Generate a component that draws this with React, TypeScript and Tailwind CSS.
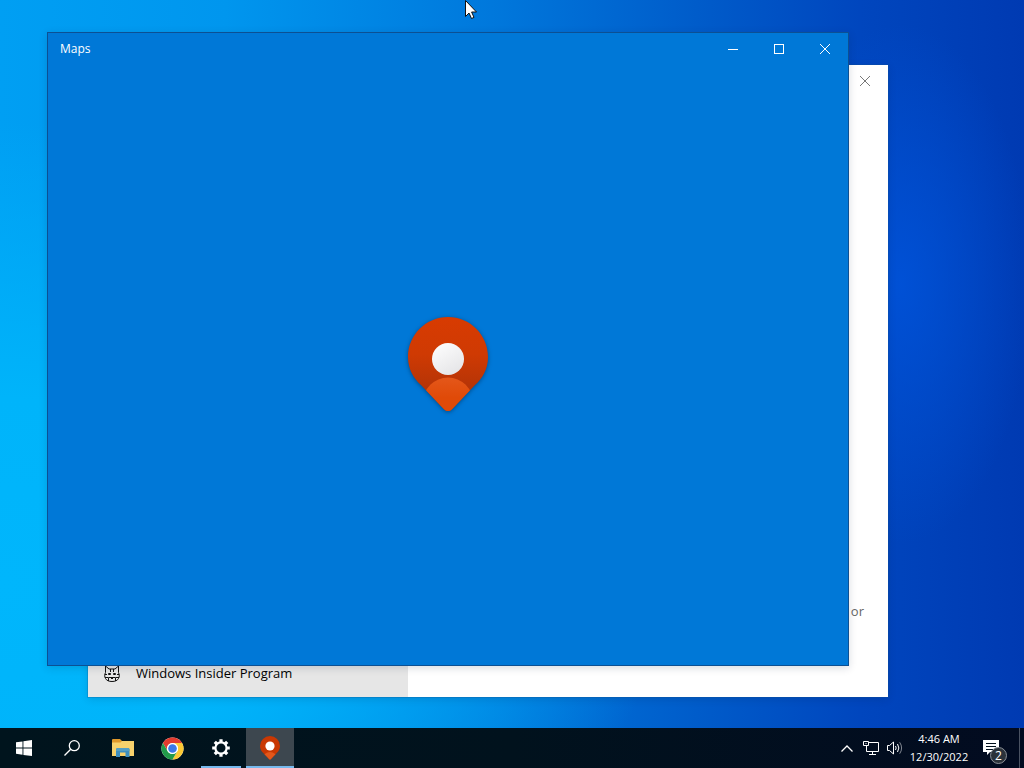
import type { ReactNode } from 'react';
import clsx from 'clsx';

function CloseGlyph() {
  return (
    <svg viewBox="0 0 10 10" className="size-[10px]" fill="none" stroke="currentColor" strokeWidth="1">
      <path d="M0 0 10 10M10 0 0 10" />
    </svg>
  );
}

function MinimizeGlyph() {
  return (
    <svg viewBox="0 0 10 10" className="size-[10px]" fill="none" stroke="currentColor" strokeWidth="1">
      <path d="M0 5.5H10" />
    </svg>
  );
}

function MaximizeGlyph() {
  return (
    <svg viewBox="0 0 10 10" className="size-[10px]" fill="none" stroke="currentColor" strokeWidth="1">
      <rect x="0.5" y="0.5" width="9" height="9" />
    </svg>
  );
}

function MapsPin({ className }: { className?: string }) {
  return (
    <svg viewBox="0 0 82 96" className={className}>
      <defs>
        <linearGradient id="pin-body" x1="0" y1="0" x2="0" y2="1">
          <stop offset="0" stopColor="#d83b01" />
          <stop offset="0.4" stopColor="#cf3a03" />
          <stop offset="0.75" stopColor="#b53407" />
        </linearGradient>
        <linearGradient id="pin-dot" x1="0" y1="0" x2="0.6" y2="1">
          <stop offset="0" stopColor="#ffffff" />
          <stop offset="1" stopColor="#e6e6e8" />
        </linearGradient>
        <linearGradient id="pin-tip" x1="0" y1="0" x2="0" y2="1">
          <stop offset="0" stopColor="#e4571a" />
          <stop offset="0.4" stopColor="#e04a08" />
        </linearGradient>
        <clipPath id="pin-shape">
          <path d="M41 1C18.900 1 1 18.900 1 41C1 53 6.500 62.500 14 69L37 93.200Q41 97 45 93.200L68 69C75.500 62.500 81 53 81 41C81 18.900 63.100 1 41 1Z" />
        </clipPath>
      </defs>
      <g clipPath="url(#pin-shape)">
        <rect width="82" height="96" fill="url(#pin-body)" />
        <circle cx="41" cy="86.500" r="25" fill="url(#pin-tip)" />
      </g>
      <circle cx="41" cy="43" r="16" fill="url(#pin-dot)" />
    </svg>
  );
}

// Taskbar size of the pin: same shape, larger dot so it reads at 24px
function MapsPinSmall() {
  return (
    <svg viewBox="0 0 20 24" className="h-6 w-5">
      <path d="M10 0A10 10 0 0 0 0 10C0 13 1.500 15.300 3.300 17.100L9 23Q10 24 11 23L16.700 17.100C18.500 15.300 20 13 20 10A10 10 0 0 0 10 0Z" fill="#c93803" />
      <path d="M4.500 18.300Q10 13.500 15.500 18.300L11 23Q10 24 9 23Z" fill="#e4571a" />
      <circle cx="10" cy="10" r="4.600" fill="#fff" />
    </svg>
  );
}

function InsiderIcon() {
  return (
    <svg viewBox="0 0 16 18" className="h-[18px] w-4" fill="none" stroke="#111">
      <path d="M1.500 7.500V1L5 4H11L14.500 1V7.500" />
      <path d="M1.500 7.500C.3 10 .6 12 1.500 13.500C2.500 15.500 5 16.500 8 16.500S13.500 15.500 14.500 13.500C15.400 12 15.700 10 14.500 7.500" />
      <path d="M6.500 4V7M9.500 4V7M.8 9.500H3M13 9.500H15.200M1 12.500H4M12 12.500H15" />
      <path d="M4.500 8.500H6.500V9.500H4.500ZM9.500 8.500H11.500V9.500H9.500ZM4.500 16V12.500H11.500V16M6.500 12.500L8 14L9.500 12.500" />
    </svg>
  );
}

function StartIcon() {
  return (
    <svg viewBox="0 0 16 16" className="size-4" fill="#fff">
      <path d="M0 2.300 6.500 1.400V7.600H0ZM7.400 1.200 16 0V7.600H7.400ZM0 8.500H6.500V14.700L0 13.800ZM7.400 8.500H16V16L7.400 14.900Z" />
    </svg>
  );
}

function SearchIcon() {
  return (
    <svg viewBox="0 0 16 16" className="size-4" fill="none" stroke="#fff" strokeWidth="1.300">
      <circle cx="10.300" cy="5.700" r="5" />
      <path d="M6.700 9.300 0.500 15.500" />
    </svg>
  );
}

function ExplorerIcon() {
  return (
    <svg viewBox="0 0 22 18" className="h-[18px] w-[22px]">
      <path d="M0 1Q0 0 1 0H8L10 2H21Q22 2 22 3V17H0Z" fill="#e0992b" />
      <path d="M0 3.500H8.500L10 2H22V17H0Z" fill="#f8d26c" />
      <path d="M4 18V10.500Q4 9 5.500 9H16Q17.500 9 17.500 10.500V18H13.500V13.500H8V18Z" fill="#3d8fc0" />
      <path d="M4 12V10.500Q4 9 5.500 9H16Q17.500 9 17.500 10.500V12Z" fill="#559fc4" />
    </svg>
  );
}

function ChromeIcon() {
  return (
    <svg viewBox="0 0 48 48" className="size-[23px]">
      <circle cx="24" cy="24" r="23" fill="#fff" />
      <path d="M4.080 12.500A23 23 0 0 1 43.920 12.500H24A11.500 11.500 0 0 0 14.040 29.750Z" fill="#e33b2e" />
      <path d="M43.920 12.500A23 23 0 0 1 24 47L33.960 29.750A11.500 11.500 0 0 0 24 12.500Z" fill="#fcc934" />
      <path d="M24 47A23 23 0 0 1 4.080 12.500L14.040 29.750A11.500 11.500 0 0 0 33.960 29.750Z" fill="#229a4a" />
      <circle cx="24" cy="24" r="11.500" fill="#fff" />
      <circle cx="24" cy="24" r="9" fill="#3b78e7" />
    </svg>
  );
}

function GearIcon() {
  return (
    <svg viewBox="0 0 18 18" className="size-[18px]" fill="none" stroke="#fff">
      <circle cx="9" cy="9" r="5.600" strokeWidth="2.200" />
      <g strokeWidth="3.200">
        <path d="M9 .2V3.500M9 14.500V17.800M.2 9H3.500M14.500 9H17.800" />
        <path d="M2.780 2.780 5 5M13 13 15.220 15.220M2.780 15.220 5 13M13 5 15.220 2.780" />
      </g>
    </svg>
  );
}

function ChevronIcon() {
  return (
    <svg viewBox="0 0 12 7" className="h-[7px] w-3" fill="none" stroke="#fff" strokeWidth="1.300">
      <path d="M.5 6.500 6 1 11.500 6.500" />
    </svg>
  );
}

function NetworkIcon() {
  return (
    <svg viewBox="0 0 16 14" className="h-[14px] w-4" fill="none" stroke="#fff">
      <path d="M6 1.500H15.500V10.500H3.500V6M9.500 10.500V13M6 13.500H13" />
      <path d="M.5 .5H5.500V4.500H.5ZM2.500 2.500H3.500M3.500 4.500V6" />
    </svg>
  );
}

function VolumeIcon() {
  return (
    <svg viewBox="0 0 16 14" className="h-[14px] w-4" fill="none" stroke="#fff">
      <path d="M.5 4.500H2.500L6.500 1V13L2.500 9.500H.5Z" />
      <path d="M8.500 5Q9.800 7 8.500 9M10.500 3Q13.200 7 10.500 11" />
      <path d="M12.700 1.300Q16.500 7 12.700 12.700" opacity="0.5" />
    </svg>
  );
}

function NotificationIcon() {
  return (
    <svg viewBox="0 0 16 16" className="size-4">
      <path d="M0 0H16V12H7L4 15V12H0Z" fill="#fff" />
      <path d="M3 3.500H13M3 6.500H13M3 9.500H10" stroke="#02101d" />
    </svg>
  );
}

function CaptionButton({ label, children }: { label: string; children: ReactNode }) {
  return (
    <button aria-label={label} className="flex h-8 w-[46px] items-center justify-center hover:bg-white/10">
      {children}
    </button>
  );
}

function SettingsWindow() {
  return (
    <section className="absolute top-[65px] left-[88px] flex h-[632px] w-[800px] bg-white shadow-[0_0_0_1px_#14549040,0_2px_8px_#00204028]">
      <nav className="flex w-80 flex-col justify-end bg-[#e6e6e6]">
        <a href="#insider" className="flex h-[46px] items-center gap-4 px-4 text-[13px] text-black">
          <InsiderIcon />
          Windows Insider Program
        </a>
      </nav>
      <div className="flex flex-1 flex-col items-end justify-between">
        <div className="text-[#777]">
          <CaptionButton label="Close">
            <CloseGlyph />
          </CaptionButton>
        </div>
        <p className="mr-6 mb-[76px] text-[13px] leading-5 text-[#666]">or</p>
      </div>
    </section>
  );
}

function MapsWindow() {
  return (
    <section className="absolute top-8 left-[47px] flex h-[634px] w-[802px] flex-col border border-[#0c5093] bg-[#0078d7] text-white shadow-[0_2px_8px_#00204028]">
      <header className="flex h-8 items-center justify-between pl-3">
        <h1 className="text-[12px]">Maps</h1>
        <div className="flex">
          <CaptionButton label="Minimize">
            <MinimizeGlyph />
          </CaptionButton>
          <CaptionButton label="Maximize">
            <MaximizeGlyph />
          </CaptionButton>
          <CaptionButton label="Close">
            <CloseGlyph />
          </CaptionButton>
        </div>
      </header>
      <div className="flex flex-1 items-center justify-center pb-0.5">
        <MapsPin className="h-24 w-[82px] drop-shadow-[0_1px_2px_#00204080]" />
      </div>
    </section>
  );
}

function Cursor() {
  return (
    <svg viewBox="0 0 12 19" className="absolute top-0 left-[465px] h-[19px] w-3">
      <path d="M.5 .5V16.500L4 13L6.500 18.500L9 17.400L6.600 12H11.500Z" fill="#fff" stroke="#111" />
    </svg>
  );
}

type TaskButtonProps = {
  label: string;
  open?: boolean;
  active?: boolean;
  children: ReactNode;
};

function TaskButton({ label, open, active, children }: TaskButtonProps) {
  return (
    <button
      aria-label={label}
      className={clsx('flex h-10 w-12 flex-col items-center pt-0.5', active && 'bg-[#3d474f]')}
    >
      <span className="flex flex-1 items-center justify-center">{children}</span>
      <span className={clsx('h-0.5', active ? 'w-full' : 'w-10', open && 'bg-[#76b9ed]')} />
    </button>
  );
}

function Taskbar() {
  return (
    <footer className="flex h-10 items-center justify-between bg-linear-to-r from-[#00141d] via-[#01121d] to-[#020b20] text-white">
      <div className="flex gap-[3px]">
        <div className="flex">
          <TaskButton label="Start">
            <StartIcon />
          </TaskButton>
          <TaskButton label="Search">
            <SearchIcon />
          </TaskButton>
        </div>
        <div className="flex gap-px">
          <TaskButton label="File Explorer">
            <ExplorerIcon />
          </TaskButton>
          <TaskButton label="Google Chrome">
            <ChromeIcon />
          </TaskButton>
          <TaskButton label="Settings" open>
            <GearIcon />
          </TaskButton>
          <TaskButton label="Maps" open active>
            <MapsPinSmall />
          </TaskButton>
        </div>
      </div>
      <div className="flex h-10 items-center">
        <button aria-label="Show hidden icons" className="flex h-10 w-6 items-center justify-center">
          <ChevronIcon />
        </button>
        <button aria-label="Network" className="flex h-10 w-6 items-center justify-center">
          <NetworkIcon />
        </button>
        <button aria-label="Volume" className="flex h-10 w-6 items-center justify-center">
          <VolumeIcon />
        </button>
        <button className="flex h-10 w-16 flex-col items-center justify-center text-[11px] leading-[18px]">
          <span>4:46 AM</span>
          <span>12/30/2022</span>
        </button>
        <button aria-label="Notifications" className="relative flex h-10 w-12 items-center pl-3">
          <NotificationIcon />
          <span className="absolute top-[19px] left-[19px] flex size-[17px] items-center justify-center rounded-full border border-[#8b9097] bg-[#2b323a] text-[12px] leading-none">
            2
          </span>
        </button>
        <div className="h-10 w-[5px] border-l border-[#4a5262]" />
      </div>
    </footer>
  );
}

export default function App() {
  return (
    <div className="flex h-screen flex-col overflow-hidden font-['Open_Sans','Noto_Sans',sans-serif]">
      <main className="relative flex-1 overflow-hidden bg-[radial-gradient(ellipse_130px_260px_at_88%_39%,#0054dccc_0%,transparent_100%),radial-gradient(ellipse_660px_460px_at_0%_80%,#00b6fc_0%,#00b4fa_40%,transparent_100%),linear-gradient(to_right,#009ff3_0%,#0096ee_22%,#0078dc_48%,#005cca_68%,#0046be_84%,#003ab2_100%)]">
        <SettingsWindow />
        <MapsWindow />
        <Cursor />
      </main>
      <Taskbar />
    </div>
  );
}
